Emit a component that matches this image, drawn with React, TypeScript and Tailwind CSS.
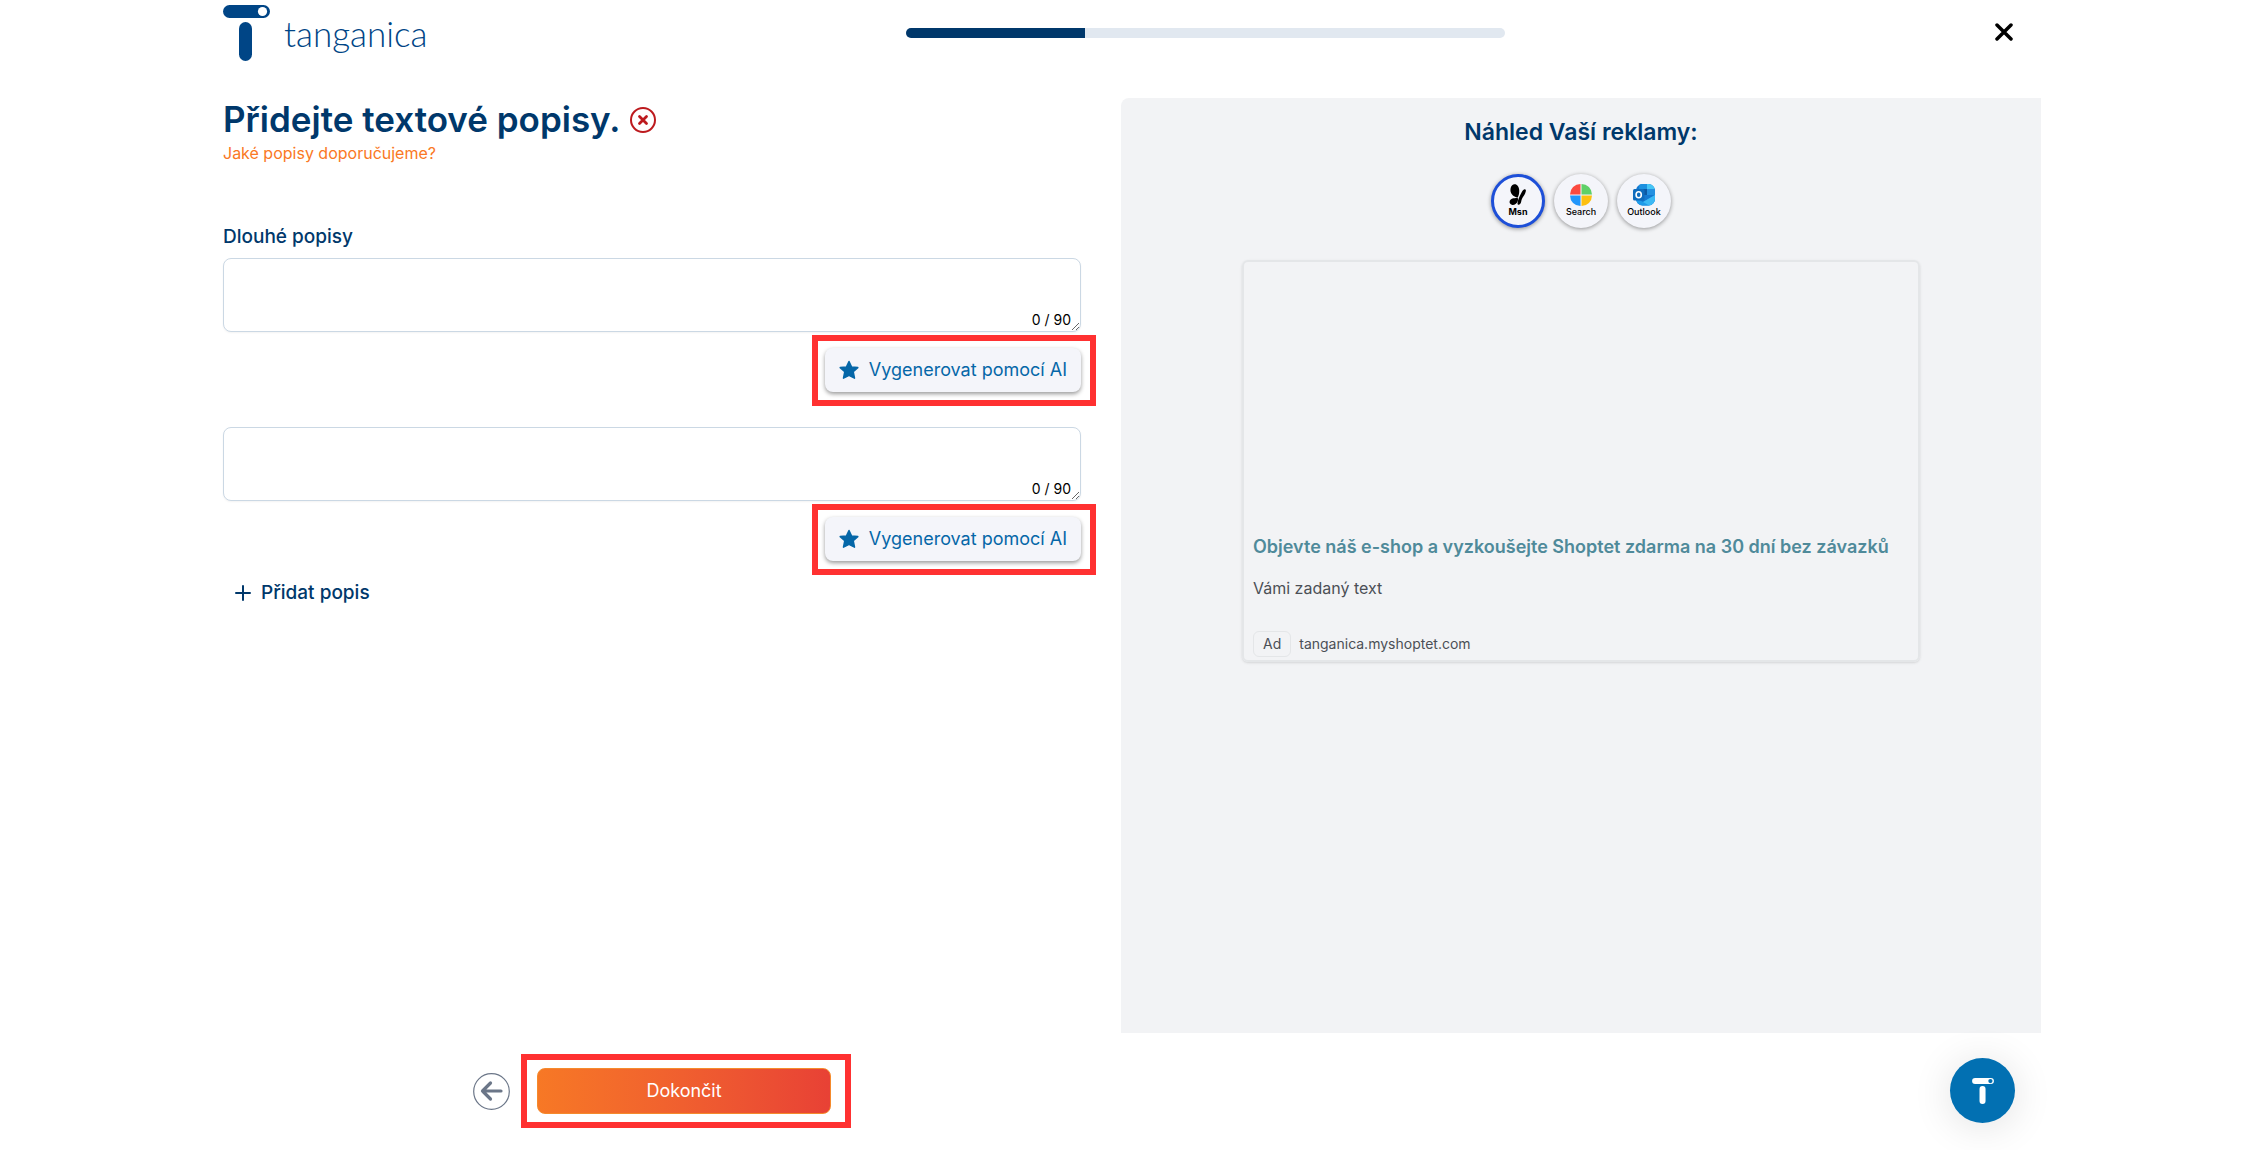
import React, { useState } from 'react';

type Channel = 'Msn' | 'Search' | 'Outlook';

const MAX_LENGTH = 90;

const LogoMark: React.FC<{ className?: string; dot: string }> = ({ className, dot }) => (
  <svg viewBox="0 0 47 56" className={className} fill="currentColor" aria-hidden="true">
    <rect x="0" y="0" width="47" height="13" rx="6.5" />
    <rect x="16" y="17" width="13" height="39" rx="6.5" />
    <circle cx="39.5" cy="6.5" r="4.6" fill={dot} />
  </svg>
);

const MsnIcon = () => (
  <svg viewBox="0 0 22 22" className="h-[22px] w-[22px]" fill="#000" aria-hidden="true">
    <path d="M7 .3C9.800-.3 12 2.400 12.200 6c.2 2.800-.3 5-1.500 7.500C8.200 13.200 4.800 11.500 3.700 8 2.900 4.800 4 1 7 .3Z" />
    <path d="M10.300 13.600c.9.800 1 2.500.2 4.200-1 2.100-3.100 3.500-5.200 3.200-2.300-.3-3.400-2.400-2.400-4.400.9-1.900 2.900-2.400 4.500-2.400 1.200 0 2-.3 2.900-.6Z" />
    <path d="M18 5.200c1.400.4 1 2.300.1 4.200-1 2.300-2.200 3.200-3.200 5.600-.7 1.800-.6 3.700-1.800 5-1 1-2.700 1-2.600-.7.2-3.100 1.900-6.500 3.400-9.500 1.100-2.200 2.400-5.100 4.100-4.600Z" />
  </svg>
);

const SearchIcon = () => (
  <svg viewBox="0 0 22 22" className="h-[22px] w-[22px]" aria-hidden="true">
    <path d="M10.500 0v10.500H0A10.500 10.500 0 0 1 10.500 0Z" fill="#fb4a40" />
    <path d="M11.500 0v10.500H22A10.500 10.500 0 0 0 11.500 0Z" fill="#5fd068" />
    <path d="M0 11.500h10.500V22A10.500 10.500 0 0 1 0 11.500Z" fill="#2196fb" />
    <path d="M22 11.500H11.500V22A10.500 10.500 0 0 0 22 11.500Z" fill="#fdc010" />
  </svg>
);

const OutlookIcon = () => (
  <svg viewBox="0 0 22 22" className="h-[22px] w-[22px]" aria-hidden="true">
    <clipPath id="outlook-shape">
      <rect x="3" y="0" width="19" height="21.500" rx="6.500" />
    </clipPath>
    <g clipPath="url(#outlook-shape)">
      <rect x="3" y="0" width="19" height="22" fill="#1478d0" />
      <path d="M6 0h8v5H6Z" fill="#1b90df" />
      <path d="M14 0h8v5h-8Z" fill="#45c5f5" />
      <path d="M14 5h8v6h-8Z" fill="#2490e0" />
      <path d="M6 5h8v6H6Z" fill="#0c59a4" />
      <path d="M3 14 10 18 22 11v11H3Z" fill="#1f9be8" />
      <path d="M22 11 10 18l7 4h5Z" fill="#3cb9f4" />
    </g>
    <rect x="0" y="5" width="11.500" height="11.500" rx="1.500" fill="#0f6cbd" />
    <ellipse cx="5.700" cy="10.700" rx="2.600" ry="3" fill="none" stroke="#fff" strokeWidth="1.600" />
  </svg>
);

const channels: { name: Channel; icon: React.ReactNode }[] = [
  { name: 'Msn', icon: <MsnIcon /> },
  { name: 'Search', icon: <SearchIcon /> },
  { name: 'Outlook', icon: <OutlookIcon /> },
];

const DescriptionField: React.FC<{
  id: string;
  label: string;
  value: string;
  onChange: (value: string) => void;
}> = ({ id, label, value, onChange }) => (
  <div className="flex flex-col">
    <div className="relative">
      <textarea
        id={id}
        aria-label={label}
        maxLength={MAX_LENGTH}
        value={value}
        onChange={(e) => onChange(e.target.value)}
        className="block h-[74px] w-full resize-y rounded-lg border border-[#cbd8e4] bg-white px-3 py-2 text-base shadow-xs outline-none"
      />
      <span className="pointer-events-none absolute right-2.5 bottom-0.5 text-sm leading-5 text-black">
        {value.length} / {MAX_LENGTH}
      </span>
    </div>
    <div className="relative mt-4 self-end">
      <button
        type="button"
        className="flex h-11 items-center gap-2.5 rounded-lg bg-[#f4f5fa] px-3.5 text-lg text-[#0567a8] shadow-[0_2px_4px_rgba(0,0,0,0.4)]"
      >
        <svg viewBox="0 0 20 20" className="h-5 w-5" fill="#0567a8" stroke="#0567a8" strokeWidth="1.500" strokeLinejoin="round" aria-hidden="true">
          <path d="M10 1.500 12.500 6.900 18.800 7.600 14.200 11.700 15.500 18.200 10 15.300 4.500 18.200 5.800 11.700 1.200 7.600 7.500 6.900Z" />
        </svg>
        Vygenerovat pomocí AI
      </button>
      <div className="pointer-events-none absolute -top-[13px] -right-[15px] -bottom-[14px] -left-[13px] border-6 border-[#ff3131]" />
    </div>
  </div>
);

export default function App() {
  const [descriptions, setDescriptions] = useState(['', '']);
  const [channel, setChannel] = useState<Channel>('Msn');

  const updateDescription = (idx: number, value: string) => {
    setDescriptions(descriptions.map((d, i) => (i === idx ? value : d)));
  };

  return (
    <div className="flex min-h-screen flex-col bg-white pr-[200px] pl-[223px] font-['Inter',sans-serif] text-[#00386b]">
      <header className="flex h-[98px] items-start justify-between pt-[5px] pr-5">
        <a href="#" className="flex gap-3.5 text-[#004586]">
          <LogoMark className="h-14 w-[47px]" dot="#fff" />
          <span className="mt-2 font-['Lato',sans-serif] text-[35px] leading-10 font-light">tanganica</span>
        </a>
        <div
          role="progressbar"
          aria-valuenow={30}
          aria-valuemin={0}
          aria-valuemax={100}
          className="mt-[23px] h-2.5 w-1/3 overflow-hidden rounded-full bg-[#e1e8f0]"
        >
          <div className="h-full w-[30%] bg-[#00386b]" />
        </div>
        <button type="button" aria-label="Zavřít" className="mt-[18px] pr-2 pl-3">
          <svg viewBox="0 0 18 18" className="h-[18px] w-[18px]" stroke="#000" strokeWidth="3.500" strokeLinecap="round">
            <path d="M2 2 16 16M16 2 2 16" />
          </svg>
        </button>
      </header>

      <main className="grid flex-1 grid-cols-[858fr_920fr] gap-10">
        <section>
          <h1 className="flex items-center gap-2.5 text-[35px] leading-[43px] font-semibold">
            Přidejte textové popisy.
            <svg viewBox="0 0 26 26" className="h-[26px] w-[26px]" fill="none" stroke="#bd1a1e" strokeWidth="2" strokeLinecap="round" aria-hidden="true">
              <circle cx="13" cy="13" r="12" />
              <path d="M9.500 9.500 16.500 16.500M16.500 9.500 9.500 16.500" strokeWidth="2.800" />
            </svg>
          </h1>
          <a href="#" className="block text-base leading-6 text-[#fa7824]">
            Jaké popisy doporučujeme?
          </a>

          <h2 className="mt-[60px] text-[19px] leading-6 font-medium">Dlouhé popisy</h2>
          <div className="mt-[9px] flex flex-col gap-[35px]">
            {descriptions.map((value, idx) => (
              <DescriptionField
                key={idx}
                id={`description-${idx}`}
                label={`Dlouhý popis ${idx + 1}`}
                value={value}
                onChange={(next) => updateDescription(idx, next)}
              />
            ))}
          </div>

          <button
            type="button"
            onClick={() => setDescriptions([...descriptions, ''])}
            className="mt-5 ml-3 flex items-center gap-2.5 text-[19px] leading-6 font-medium"
          >
            <svg viewBox="0 0 16 16" className="h-4 w-4" stroke="currentColor" strokeWidth="2" strokeLinecap="round" aria-hidden="true">
              <path d="M8 1v14M1 8h14" />
            </svg>
            Přidat popis
          </button>
        </section>

        <aside className="flex flex-col items-center rounded-tl-lg bg-[#f2f3f5] pt-5">
          <h2 className="text-[23px] leading-7 font-semibold">Náhled Vaší reklamy:</h2>

          <div className="mt-7 flex gap-[9px]">
            {channels.map(({ name, icon }) => (
              <button
                key={name}
                type="button"
                onClick={() => setChannel(name)}
                aria-pressed={channel === name}
                className={`flex h-[54px] w-[54px] flex-col items-center justify-center rounded-full bg-[#f4f5fa] text-[9px] leading-3 text-black shadow-[0_1px_4px_rgba(0,0,0,0.4)] ${
                  channel === name ? 'border-3 border-[#1d4fd8] font-bold' : 'font-medium'
                }`}
              >
                {icon}
                {name}
              </button>
            ))}
          </div>

          <article className="mt-8 flex w-[678px] max-w-full flex-col rounded-md border-2 border-[#e4e6e8] px-[9px] pt-[271px] pb-[3px] shadow-sm">
            <h3 className="text-lg leading-7 font-semibold text-[#4f8a9a]">
              Objevte náš e-shop a vyzkoušejte Shoptet zdarma na 30 dní bez závazků
            </h3>
            <p className="mt-[15px] text-base leading-6 text-[#4b4f56]">Vámi zadaný text</p>
            <div className="mt-[31px] flex items-center gap-2 text-sm leading-5 text-[#4b4f56]">
              <span className="rounded-md border border-[#e4e6e8] px-[9px] py-0.5">Ad</span>
              <span>tanganica.myshoptet.com</span>
            </div>
          </article>
        </aside>
      </main>

      <footer className="flex h-[117px] items-center gap-[27px] pb-px pl-[250px]">
        <button type="button" aria-label="Zpět">
          <svg viewBox="0 0 37 37" className="h-[37px] w-[37px]" fill="none" stroke="#6b7688" strokeLinecap="round" strokeLinejoin="round">
            <circle cx="18.500" cy="18.500" r="17.800" strokeWidth="1.200" />
            <path d="M28 18H9.500M17.500 10 9.500 18 17.500 26" strokeWidth="3.200" />
          </svg>
        </button>
        <div className="relative">
          <button
            type="button"
            className="h-[46px] w-[294px] rounded-lg border border-[#f58a2c] bg-linear-to-r from-[#f77825] to-[#e84135] text-lg text-white"
          >
            Dokončit
          </button>
          <div className="pointer-events-none absolute -top-[14px] -right-[20px] -bottom-[14px] -left-[16px] border-6 border-[#ff3131]" />
        </div>
      </footer>

      <button
        type="button"
        aria-label="Otevřít chat"
        className="fixed right-[226px] bottom-[27px] flex h-[65px] w-[65px] items-center justify-center rounded-full bg-[#0270b2] text-white shadow-[0_4px_40px_rgba(0,0,0,0.12)]"
      >
        <LogoMark className="h-[26px] w-[22px]" dot="#0270b2" />
      </button>
    </div>
  );
}
